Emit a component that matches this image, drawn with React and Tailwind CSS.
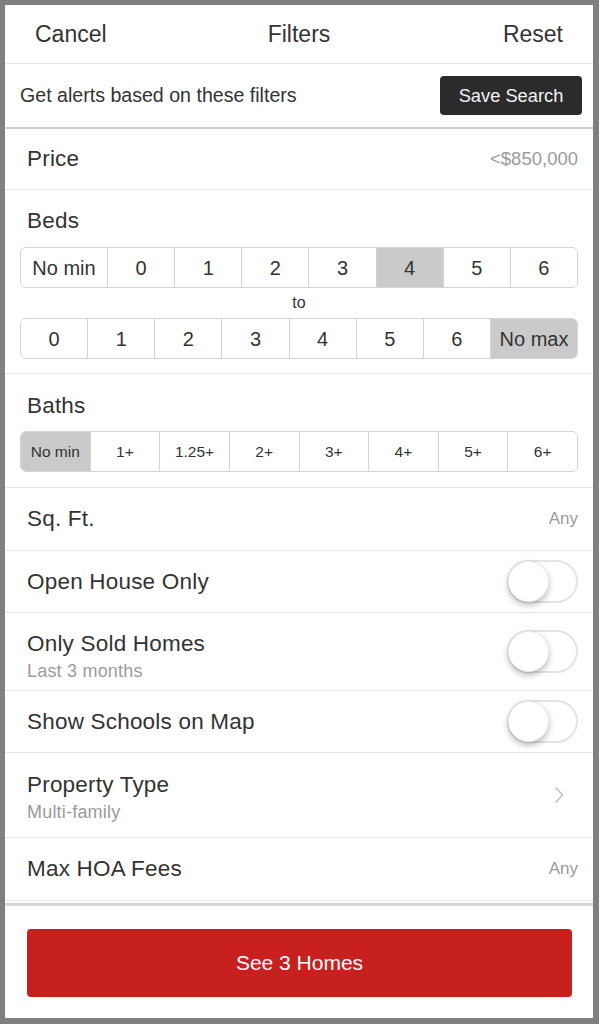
import React from "react";

const font = { fontFamily: '"Liberation Sans", Arial, sans-serif' };

function Segments({ items, selected, wide = {}, textClass }) {
  return (
    <div className="flex h-[41px] rounded-[6px] border border-[#d4d4d4] overflow-hidden bg-white">
      {items.map((label, i) => (
        <div
          key={label + i}
          className={
            "flex items-center justify-center " +
            (i > 0 ? "border-l border-[#d4d4d4] " : "") +
            (wide[i] ? wide[i] + " shrink-0 " : "flex-1 ") +
            (selected === i ? "bg-[#cacaca] " : "bg-white ") +
            textClass
          }
        >
          {label}
        </div>
      ))}
    </div>
  );
}

function Toggle() {
  return (
    <div className="relative w-[71px] h-[43px] rounded-full border-2 border-[#e4e4e4] bg-white">
      <div className="absolute left-[-1px] top-[-1px] w-[41px] h-[41px] rounded-full bg-white shadow-[0_3px_6px_rgba(0,0,0,0.28)] border border-[#ececec]" />
    </div>
  );
}

function Row({ h, children, border = true }) {
  return (
    <div
      className={
        "flex items-center justify-between pl-[22px] pr-[15px] " +
        h +
        (border ? " border-b border-[#e6e6e6]" : "")
      }
    >
      {children}
    </div>
  );
}

const label = "text-[22.5px] tracking-[0.2px] leading-[26px]";
const sub = "text-[18px] leading-[22px] text-[#9b9b9b] tracking-[0.2px]";

export default function App() {
  return (
    <div
      style={font}
      className="w-[599px] h-[1024px] bg-[#808080] pt-[5px] pl-[5px] pr-[6px] pb-[6px] text-[#333]"
    >
      <div className="w-full h-full bg-white flex flex-col overflow-hidden">
        {/* top bar */}
        <div className="h-[59px] shrink-0 grid grid-cols-3 items-center px-[30px] border-b border-[#e6e6e6] text-[23px]">
          <span className="justify-self-start">Cancel</span>
          <span className="justify-self-center">Filters</span>
          <span className="justify-self-end">Reset</span>
        </div>

        {/* saved-search prompt */}
        <div className="h-[65px] shrink-0 flex items-center justify-between pl-[15px] pr-[11px] border-b-2 border-[#d2d2d2]">
          <span className="text-[19.6px]">Get alerts based on these filters</span>
          <button className="h-[39px] w-[142px] rounded-[4px] bg-[#2b2b2b] text-[#f2f2f2] text-[18.3px]">
            Save Search
          </button>
        </div>

        {/* filters */}
        <div className="flex-1 flex flex-col">
          <Row h="h-[61px]">
            <span className={label}>Price</span>
            <span className="text-[18.5px] text-[#9a9a9a]">&lt;$850,000</span>
          </Row>

          <div className="h-[184px] shrink-0 border-b border-[#e6e6e6] flex flex-col">
            <div className={"pl-[22px] pt-[18px] h-[57px] " + label}>Beds</div>
            <div className="px-[15px]">
              <Segments
                items={["No min", "0", "1", "2", "3", "4", "5", "6"]}
                selected={5}
                wide={{ 0: "w-[86px]" }}
                textClass="text-[20px]"
              />
            </div>
            <div className="h-[30px] flex items-center justify-center text-[16px]">to</div>
            <div className="px-[15px]">
              <Segments
                items={["0", "1", "2", "3", "4", "5", "6", "No max"]}
                selected={7}
                wide={{ 7: "w-[87px]" }}
                textClass="text-[20px]"
              />
            </div>
          </div>

          <div className="h-[114px] shrink-0 border-b border-[#e6e6e6] flex flex-col">
            <div className={"pl-[22px] pt-[19px] h-[57px] " + label}>Baths</div>
            <div className="px-[15px]">
              <Segments
                items={["No min", "1+", "1.25+", "2+", "3+", "4+", "5+", "6+"]}
                selected={0}
                textClass="text-[15.5px]"
              />
            </div>
          </div>

          <Row h="h-[63px]">
            <span className={label}>Sq. Ft.</span>
            <span className="text-[17px] text-[#9a9a9a]">Any</span>
          </Row>

          <Row h="h-[62px]">
            <span className={label}>Open House Only</span>
            <Toggle />
          </Row>

          <Row h="h-[78px]">
            <div className="flex flex-col gap-[3px] mt-[10px]">
              <span className={label}>Only Sold Homes</span>
              <span className={sub}>Last 3 months</span>
            </div>
            <Toggle />
          </Row>

          <Row h="h-[62px]">
            <span className={label}>Show Schools on Map</span>
            <Toggle />
          </Row>

          <Row h="h-[85px]">
            <div className="flex flex-col gap-[3px] mt-[5px]">
              <span className={label}>Property Type</span>
              <span className={sub}>Multi-family</span>
            </div>
            <svg width="14" height="20" viewBox="0 0 14 20" className="mr-[12px]">
              <path d="M3.5 2.5 L10.5 10 L3.5 17.5" fill="none" stroke="#c4c4c8" strokeWidth="1.8" />
            </svg>
          </Row>

          <Row h="h-[63px]">
            <span className={label}>Max HOA Fees</span>
            <span className="text-[17px] text-[#9a9a9a]">Any</span>
          </Row>
        </div>

        {/* footer action */}
        <div className="h-[115px] shrink-0 border-t-[3px] border-[#d8d8d8] pt-[23px] pl-[22px] pr-[21px]">
          <button className="w-full h-[68px] rounded-[4px] bg-[#c81f1f] text-white text-[21px]">
            See 3 Homes
          </button>
        </div>
      </div>
    </div>
  );
}
